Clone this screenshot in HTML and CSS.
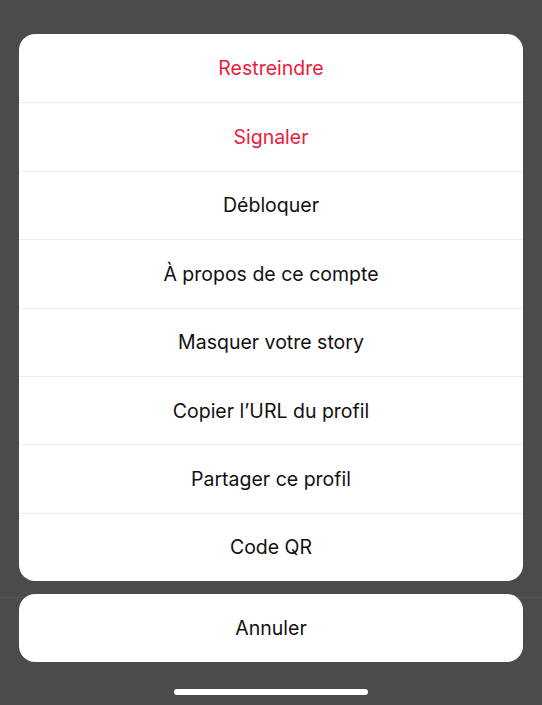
FILE: index.html
```html
<!DOCTYPE html>
<html lang="fr">
<head>
    <meta charset="UTF-8">
    <meta name="viewport" content="width=device-width, initial-scale=1.0">
    <title>Options du profil</title>
    <link rel="stylesheet" href="styles.css">
</head>
<body>
    <div class="screen">
        <ul class="sheet">
            <li class="action danger">Restreindre</li>
            <li class="action danger">Signaler</li>
            <li class="action">Débloquer</li>
            <li class="action">À propos de ce compte</li>
            <li class="action">Masquer votre story</li>
            <li class="action">Copier l’URL du profil</li>
            <li class="action">Partager ce profil</li>
            <li class="action">Code QR</li>
        </ul>
        <div class="sheet cancel">
            <div class="action">Annuler</div>
        </div>
        <div class="home-bar"></div>
    </div>
</body>
</html>
```

FILE: styles.css
```css
html, body {
    margin: 0;
    padding: 0;
    background-color: #4b4b4b;
}
body {
    font-family: Inter, "Liberation Sans", Arial, sans-serif;
    -webkit-font-smoothing: antialiased;
}
.screen {
    width: 542px;
    height: 705px;
    box-sizing: border-box;
    padding: 34px 19px 0;
    display: flex;
    flex-direction: column;
    background: linear-gradient(#4b4b4b 597px, #555 597px, #555 598px, #4b4b4b 598px);
}
.sheet {
    list-style: none;
    margin: 0;
    padding: 0;
    background: #fff;
    border-radius: 16px;
    overflow: hidden;
}
.action {
    height: 68.4px;
    display: flex;
    align-items: center;
    justify-content: center;
    font-size: 19.5px;
    color: #111;
    border-top: 1px solid #ececec;
    box-sizing: border-box;
}
.action:first-child {
    border-top: none;
}
.danger {
    color: #ed1b3b;
}
.cancel {
    margin-top: 13px;
}
.cancel .action {
    height: 68px;
}
.home-bar {
    align-self: center;
    width: 194px;
    height: 6px;
    margin-top: 27px;
    border-radius: 3px;
    background: #fff;
}
```
